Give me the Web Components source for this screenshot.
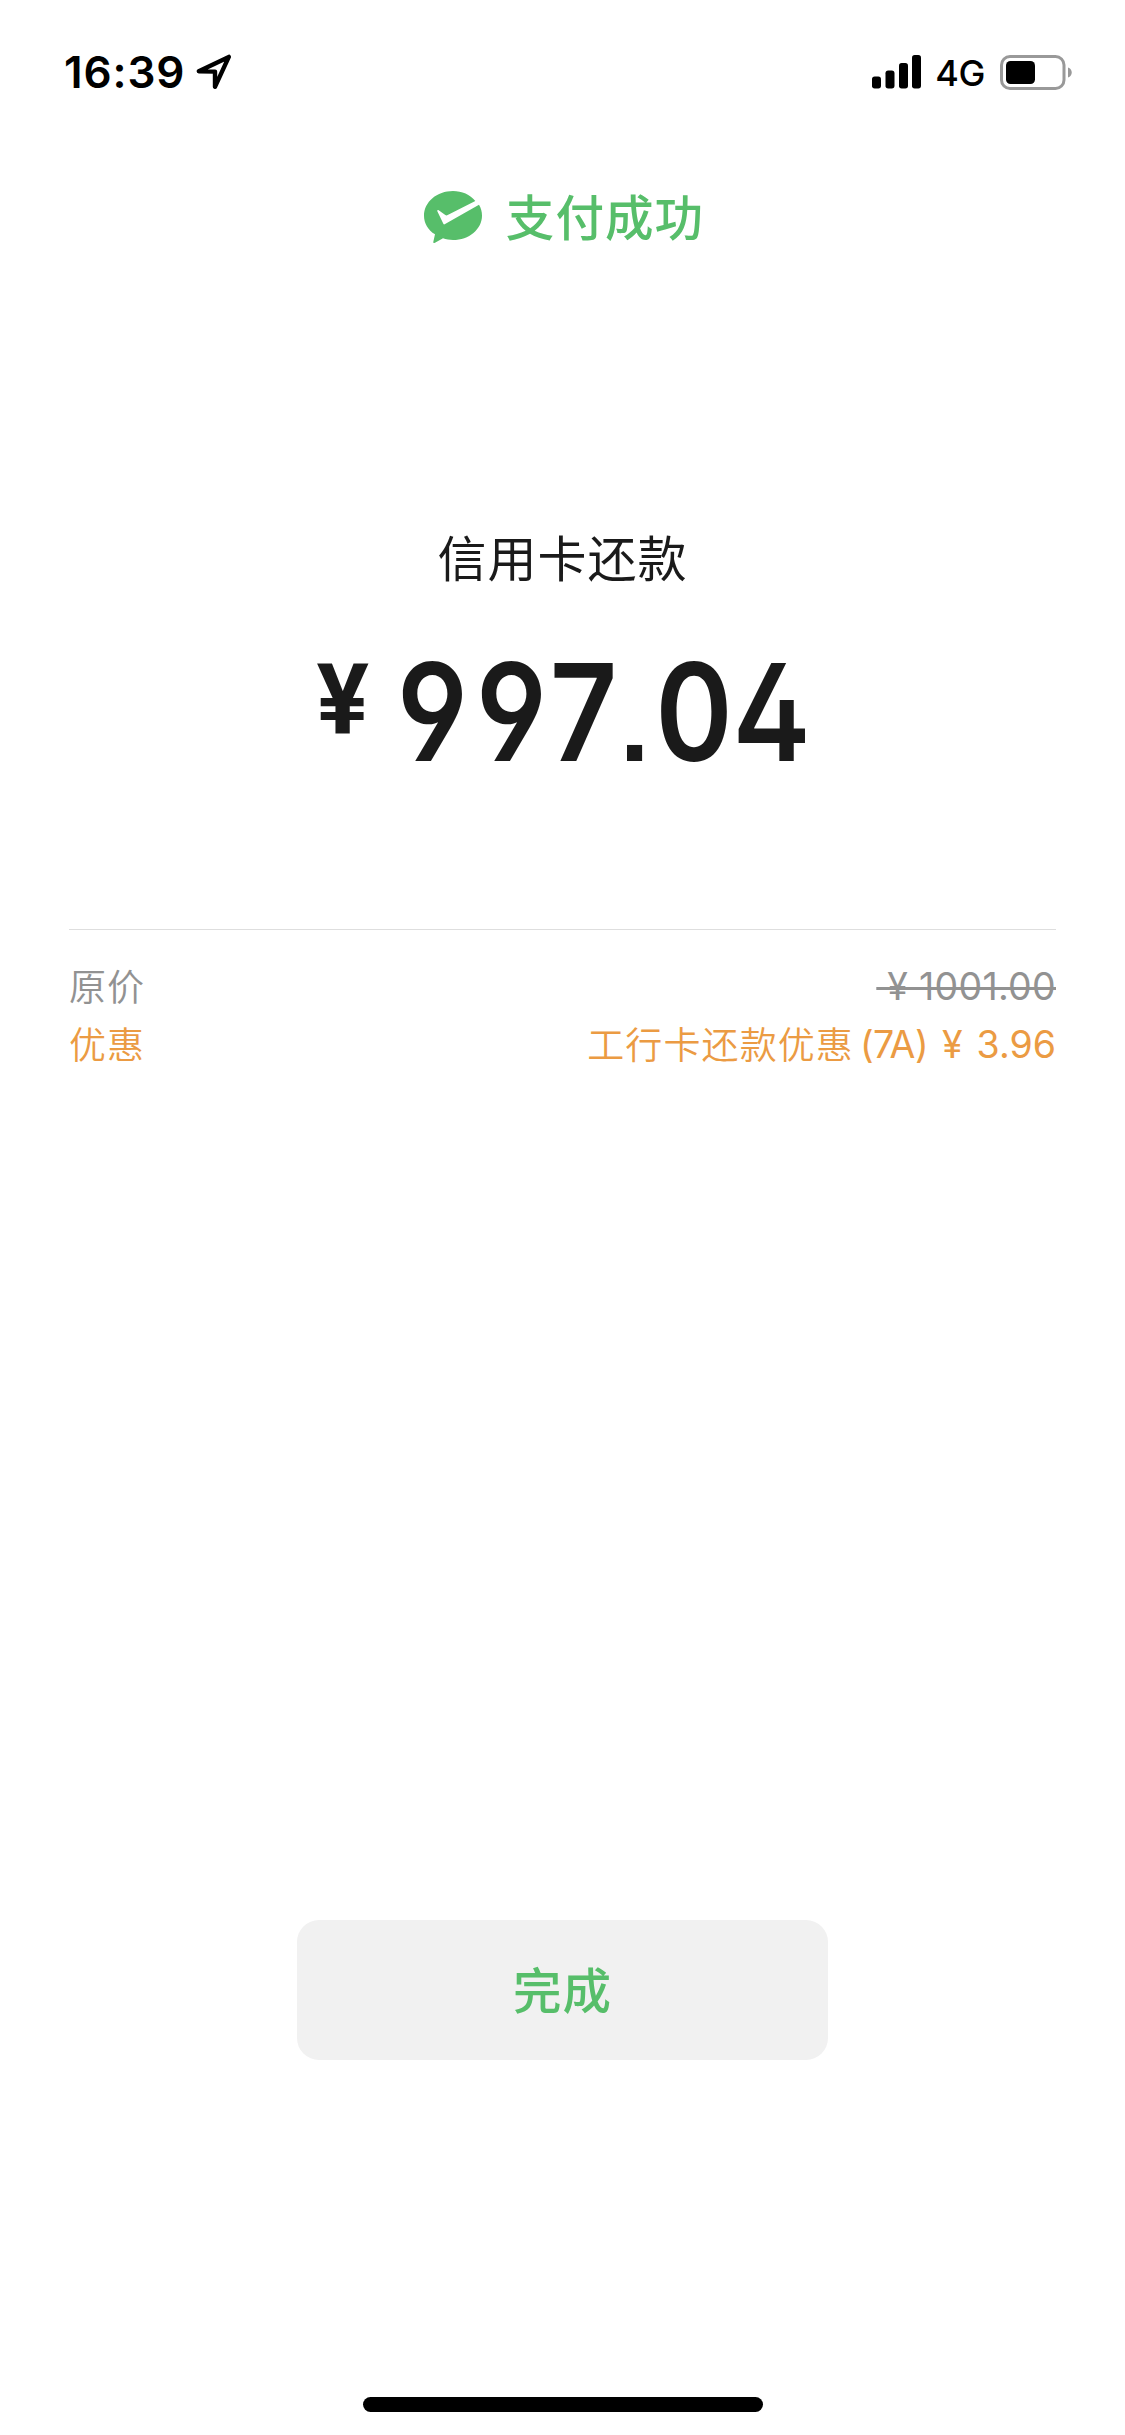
<!DOCTYPE html>
<html lang="zh-CN">
<head>
<meta charset="utf-8">
<title>支付成功</title>
<style>
html,body{margin:0;background:#fff}
body{font-family:Inter,"Noto Sans CJK SC",sans-serif}
</style>
</head>
<body>
<pay-screen>
  <status-bar slot="status" time="16:39" network="4G"></status-bar>
  <pay-result slot="result">支付成功</pay-result>
  <pay-amount slot="amount" label="信用卡还款" value="997.04"></pay-amount>
  <pay-details slot="details">
    <detail-row label="原价" class="old"><s>&nbsp;¥&nbsp;1001.00</s></detail-row>
    <detail-row label="优惠" class="promo"><span class="cn">工行卡还款优惠</span><span class="code">(7A)</span><span class="yen">¥</span><span>3.96</span></detail-row>
  </pay-details>
  <done-button slot="action">完成</done-button>
</pay-screen>
<script>
const define = (name, html, setup) => {
  const tpl = document.createElement('template');
  tpl.innerHTML = html;
  customElements.define(name, class extends HTMLElement {
    constructor() {
      super();
      this.attachShadow({mode: 'open'}).append(tpl.content.cloneNode(true));
    }
    connectedCallback() { if (setup) setup(this, this.shadowRoot); }
  });
};

define('pay-screen', `
<style>
:host{display:flex;flex-direction:column;align-items:center;box-sizing:border-box;width:1125px;height:2435px;background:#fff;overflow:hidden}
.home{width:400px;height:15px;border-radius:8px;background:#000;margin-top:auto;margin-bottom:23px}
</style>
<slot name="status"></slot><slot name="result"></slot><slot name="amount"></slot><slot name="details"></slot><slot name="action"></slot>
<div class="home"></div>`);

define('status-bar', `
<style>
:host{display:flex;align-items:center;box-sizing:border-box;width:100%;height:144px;padding:0 52px 0 64px;color:#000}
.time{font-size:44px;font-weight:600;line-height:52px;letter-spacing:.9px;margin-top:-1px}
svg{display:block;flex:none}
.loc{margin-left:11px}
.sig{margin-left:auto}
.net{font-size:36px;line-height:52px;margin-left:14px;font-weight:450;margin-top:2px;letter-spacing:-.4px}
.bat{margin-left:15px}
</style>
<span class="time"></span>
<svg class="loc" width="36" height="36" viewBox="0 0 36 36"><path d="M2.8 17.2 32.8 2.9 19 32.8V17.6Z" fill="none" stroke="#000" stroke-width="4.4" stroke-linejoin="round"/></svg>
<svg class="sig" width="49" height="34" viewBox="0 0 49 34"><rect y="21.5" width="9" height="12" rx="2.7"/><rect x="13.5" y="15.5" width="9" height="18" rx="2.7"/><rect x="27" y="8" width="9" height="25.5" rx="2.7"/><rect x="40" y="0" width="9" height="33.5" rx="2.7"/></svg>
<span class="net"></span>
<svg class="bat" width="73" height="35" viewBox="0 0 73 35"><rect x="1.5" y="1.5" width="62.5" height="32" rx="8.5" fill="none" stroke="#999" stroke-width="3"/><rect x="6" y="6" width="29" height="23" rx="4.5"/><path d="M68 12.5c5 1.4 5 8.6 0 10Z" fill="#999"/></svg>`,
(el, root) => {
  root.querySelector('.time').textContent = el.getAttribute('time');
  root.querySelector('.net').textContent = el.getAttribute('network');
});

define('pay-result', `
<style>
:host{display:flex;align-items:center;height:72px;margin-top:37px;padding-left:3px;color:#57be6a;font-size:48.5px;line-height:72px;font-weight:500;letter-spacing:1.1px;font-family:"Noto Sans CJK SC",sans-serif}
svg{display:block;margin-right:24px}
.t{padding-bottom:5px}
</style>
<svg width="58" height="52" viewBox="0 0 174 156"><path fill="#57be6a" d="M154 30C138 11 114 0 87 0 39 0 0 33 0 74c0 22 12 43 33 56l-5 22c-1 4 1 5 5 3l24-13c9 4 20 5 30 5 48 0 87-33 87-73 0-12-3-23-9-33L62 100c-2 1-3 0-4-2L40 61c-1-3 1-5 4-3l20 14c2 1 4 2 7 0Z"/></svg>
<span class="t"><slot></slot></span>`);

define('pay-amount', `
<style>
:host{display:flex;flex-direction:column;align-items:center;margin-top:267px;color:#1a1a1a}
.label{font-size:49px;line-height:72px;letter-spacing:1px;font-family:"Noto Sans CJK SC",sans-serif}
.sum{display:flex;align-items:flex-start;margin-top:50px;height:140px;width:492px}
.yen{font:700 98px/116px Roboto,sans-serif;width:76px;margin-top:1px}
.num{display:flex;align-items:baseline;font:630 135px/140px Inter,sans-serif;font-feature-settings:"cv04","ss01"}
.num span{display:flex;justify-content:center;width:79px;transform:scaleX(.87)}
.num .d7{width:65px}
.num .d0{width:80px}
.num .d4{width:75px}
.num .dot{width:38px;font:700 107px/110px "Liberation Sans",sans-serif;transform:none}
</style>
<div class="label"></div>
<div class="sum"><span class="yen">¥</span><span class="num"></span></div>`,
(el, root) => {
  root.querySelector('.label').textContent = el.getAttribute('label');
  root.querySelector('.num').replaceChildren(...[...el.getAttribute('value')].map(ch => {
    const s = document.createElement('span');
    s.textContent = ch;
    s.className = ch === '.' ? 'dot' : 'd' + ch;
    return s;
  }));
});

define('pay-details', `
<style>
:host{display:flex;flex-direction:column;box-sizing:border-box;width:987px;margin-top:147px;border-top:1px solid #dedede;padding-top:29px}
</style><slot></slot>`);

define('detail-row', `
<style>
:host{display:flex;justify-content:space-between;align-items:center;height:58px;font-size:37.5px;line-height:58px;white-space:nowrap;font-weight:370}
:host(.old){color:#929292}
:host(.promo){color:#eb9b43}
.k{font-family:"Noto Sans CJK SC",sans-serif;font-size:37px;font-weight:350;letter-spacing:1.1px;padding-bottom:6px}
::slotted(.cn){font-family:"Noto Sans CJK SC",sans-serif;font-size:37px;font-weight:350;letter-spacing:1.1px;margin-top:-2px}
.v{display:flex;padding-bottom:2px}
::slotted(s){text-decoration-thickness:3px;letter-spacing:.3px}
::slotted(.code){margin-left:6px;letter-spacing:-.6px}
::slotted(.yen){margin:0 14px 0 14px}
</style>
<span class="k"></span><span class="v"><slot></slot></span>`,
(el, root) => { root.querySelector('.k').textContent = el.getAttribute('label'); });

define('done-button', `
<style>
:host{display:block;margin-top:845px}
button{display:block;border:0;padding:0 0 4px;width:531px;height:140px;border-radius:22px;background:#f1f1f1;color:#57be6a;font:500 48.5px/136px "Noto Sans CJK SC",sans-serif;letter-spacing:1px}
</style>
<button type="button"><slot></slot></button>`);
</script>
</body>
</html>
